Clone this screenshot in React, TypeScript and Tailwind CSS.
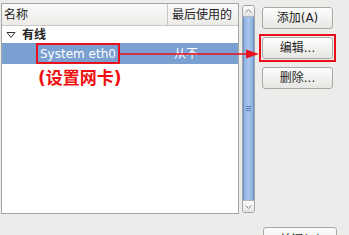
import React from 'react';

const FONT = "font-['DejaVu_Sans','Noto_Sans_CJK_SC',sans-serif]";

const Button = ({ label, highlight }: { label: string; highlight?: boolean }) => (
    <div className={highlight ? 'border-2 border-[#e8101a] p-px' : 'p-[3px]'}>
        <div className="h-[22px] rounded-[3px] border border-[#a9a9a6] bg-gradient-to-b from-[#fdfdfd] to-[#e6e6e3] flex items-center justify-center text-[12px] text-[#1e1e1e]">
            {label}
        </div>
    </div>
);

const App = () => {
    return (
        <div className={`relative w-[349px] h-[235px] overflow-hidden bg-[#edecea] ${FONT}`}>
            <div className="flex pt-[3px] pl-px">
                {/* list */}
                <div className="w-[238px] h-[211px] border border-[#a7a6a2] bg-white flex flex-col">
                    <div className="h-[22px] flex border-b border-[#c9c8c4] bg-gradient-to-b from-[#fafafa] to-[#ecebe8] text-[12px] text-[#222]">
                        <div className="w-[166px] pl-[2px] flex items-center border-r border-[#c8c7c3]">名称</div>
                        <div className="flex-1 pl-[4px] flex items-center whitespace-nowrap overflow-hidden">最后使用的</div>
                    </div>
                    <div className="h-[17px] flex items-center text-[12px] font-bold text-[#222]">
                        <svg width="10" height="8" viewBox="0 0 10 8" className="ml-[4px] mr-[6px]">
                            <path d="M1 1.5 L9 1.5 L5 6.5 Z" fill="none" stroke="#333" strokeWidth="1" />
                        </svg>
                        有线
                    </div>
                    <div className="h-[21px] flex items-center bg-[#7aa0d2] text-white text-[12px]">
                        <div className="w-[166px] pl-[34px] flex items-center">
                            <span className="border-2 border-[#e8101a] px-[2px] h-[21px] flex items-center whitespace-nowrap">System eth0</span>
                        </div>
                        <div className="pl-[6px] text-[12px]">从不</div>
                    </div>
                    <div className="pl-[36px] pt-[3px] text-[17px] font-bold text-[#f01010] leading-[22px]">(设置网卡)</div>
                </div>
                {/* scrollbar */}
                <div className="ml-[3px] mt-[2px] w-[13px] h-[208px] flex flex-col rounded-[3px] border border-[#9fa3a8] bg-[#e3e2df] overflow-hidden">
                    <div className="h-[11px] flex items-center justify-center bg-gradient-to-b from-[#fbfbfb] to-[#e4e4e2] border-b border-[#b4b6b8]">
                        <svg width="7" height="4" viewBox="0 0 7 4"><path d="M0.5 3.5 L3.5 0.5 L6.5 3.5" fill="none" stroke="#888" /></svg>
                    </div>
                    <div className="flex-1 bg-gradient-to-r from-[#8fb1e0] via-[#aac6ee] to-[#8aaddc] border-x border-[#6f95c9] flex items-center justify-center">
                        <div className="flex flex-col gap-px">
                            <div className="w-[5px] h-px bg-[#5a7fb3]" />
                            <div className="w-[5px] h-px bg-[#5a7fb3]" />
                            <div className="w-[5px] h-px bg-[#5a7fb3]" />
                        </div>
                    </div>
                    <div className="h-[12px] flex items-center justify-center bg-gradient-to-b from-[#fbfbfb] to-[#e4e4e2] border-t border-[#b4b6b8]">
                        <svg width="7" height="4" viewBox="0 0 7 4"><path d="M0.5 0.5 L3.5 3.5 L6.5 0.5" fill="none" stroke="#888" /></svg>
                    </div>
                </div>
                {/* buttons */}
                <div className="ml-[4px] w-[77px] flex flex-col gap-[2px] pt-px">
                    <Button label="添加(A)" />
                    <Button label="编辑..." highlight />
                    <Button label="删除..." />
                </div>
            </div>
            <div className="absolute left-[263px] top-[227px] w-[74px] h-[22px] rounded-[3px] border border-[#a9a9a6] bg-gradient-to-b from-[#fdfdfd] to-[#e6e6e3] flex justify-center pt-[3px] text-[12px] text-[#1e1e1e]">
                关闭(C)
            </div>
            {/* annotation arrow */}
            <svg className="absolute left-0 top-0" width="349" height="235">
                <line x1="120" y1="54" x2="249" y2="54" stroke="#e8101a" strokeWidth="1.5" />
                <path d="M246 49.5 L259 54 L246 58.5 Z" fill="#e8101a" />
            </svg>
        </div>
    );
};

export default App;
